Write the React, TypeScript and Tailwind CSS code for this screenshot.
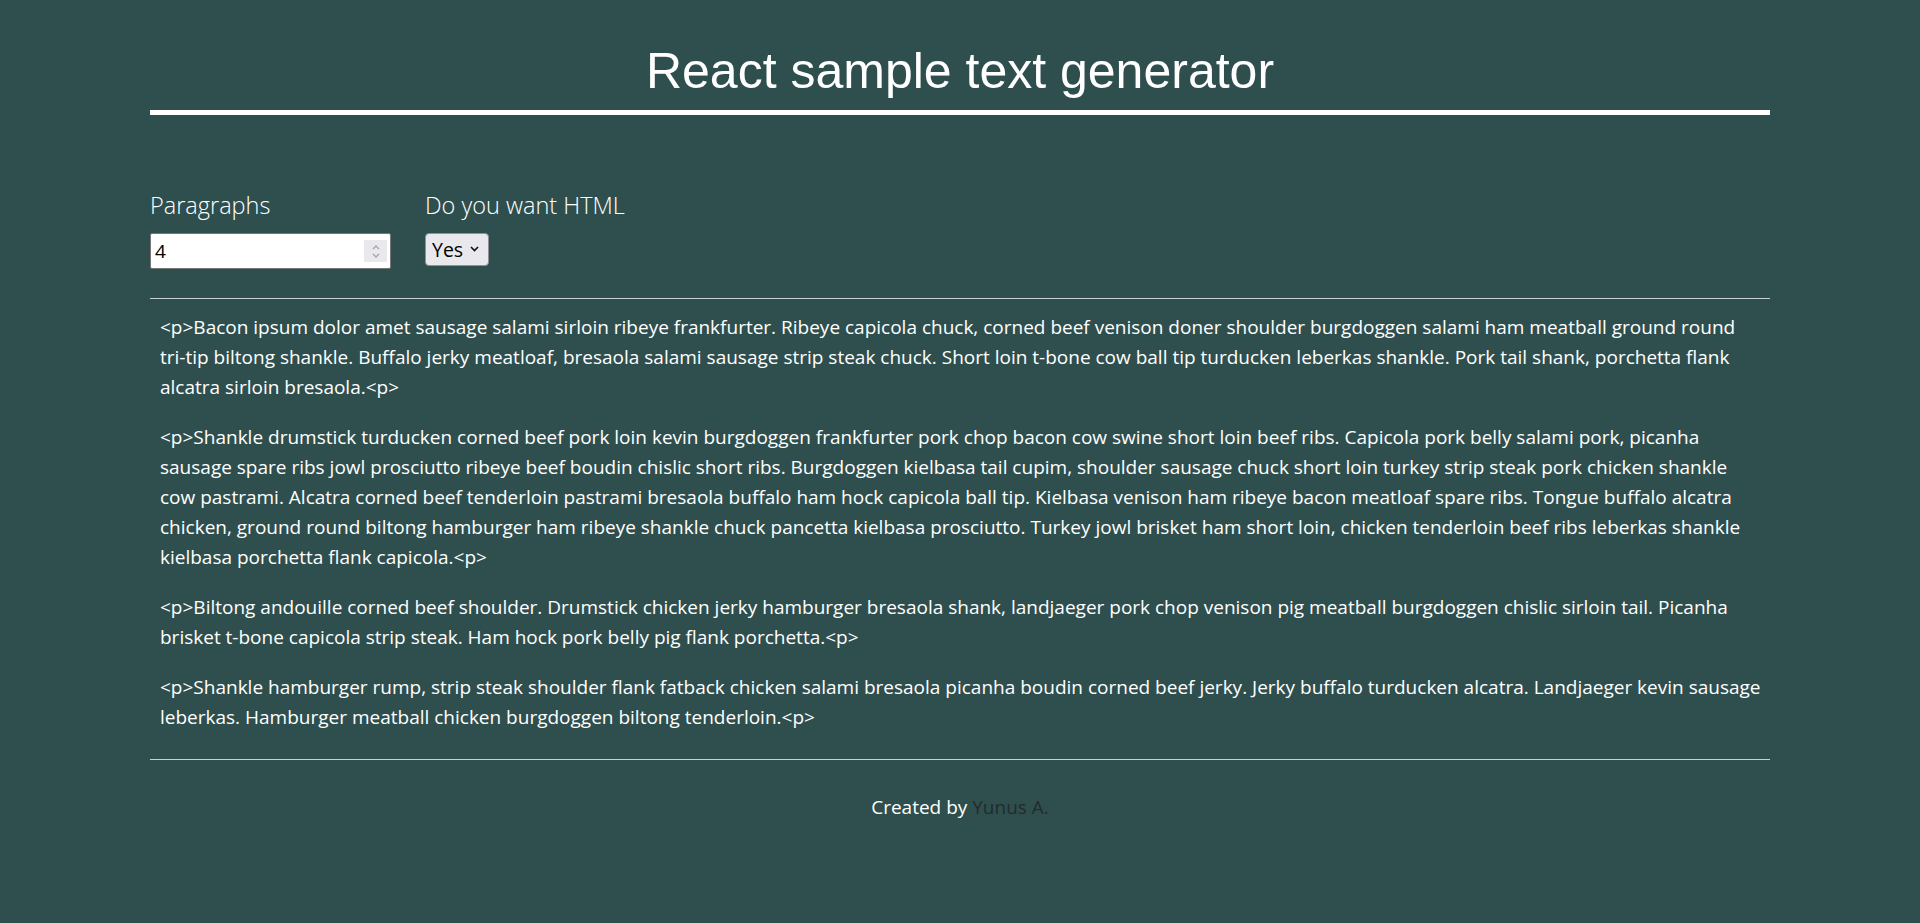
import React from "react";

const paragraphs: string[][] = [
  [
    "<p>Bacon ipsum dolor amet sausage salami sirloin ribeye frankfurter. Ribeye capicola chuck, corned beef venison doner shoulder burgdoggen salami ham meatball ground round",
    "tri-tip biltong shankle. Buffalo jerky meatloaf, bresaola salami sausage strip steak chuck. Short loin t-bone cow ball tip turducken leberkas shankle. Pork tail shank, porchetta flank",
    "alcatra sirloin bresaola.<p>",
  ],
  [
    "<p>Shankle drumstick turducken corned beef pork loin kevin burgdoggen frankfurter pork chop bacon cow swine short loin beef ribs. Capicola pork belly salami pork, picanha",
    "sausage spare ribs jowl prosciutto ribeye beef boudin chislic short ribs. Burgdoggen kielbasa tail cupim, shoulder sausage chuck short loin turkey strip steak pork chicken shankle",
    "cow pastrami. Alcatra corned beef tenderloin pastrami bresaola buffalo ham hock capicola ball tip. Kielbasa venison ham ribeye bacon meatloaf spare ribs. Tongue buffalo alcatra",
    "chicken, ground round biltong hamburger ham ribeye shankle chuck pancetta kielbasa prosciutto. Turkey jowl brisket ham short loin, chicken tenderloin beef ribs leberkas shankle",
    "kielbasa porchetta flank capicola.<p>",
  ],
  [
    "<p>Biltong andouille corned beef shoulder. Drumstick chicken jerky hamburger bresaola shank, landjaeger pork chop venison pig meatball burgdoggen chislic sirloin tail. Picanha",
    "brisket t-bone capicola strip steak. Ham hock pork belly pig flank porchetta.<p>",
  ],
  [
    "<p>Shankle hamburger rump, strip steak shoulder flank fatback chicken salami bresaola picanha boudin corned beef jerky. Jerky buffalo turducken alcatra. Landjaeger kevin sausage",
    "leberkas. Hamburger meatball chicken burgdoggen biltong tenderloin.<p>",
  ],
];

export default function App() {
  return (
    <div className="min-h-[923px] bg-[#2f4f4f] text-white font-['Open_Sans',sans-serif]">
      <div className="mx-[150px]">
        <h1 className="pt-[43px] pb-[10px] border-b-[5px] border-white text-center text-[50px] leading-[57px] font-normal font-['Liberation_Sans',Arial,sans-serif]">
          React sample text generator
        </h1>

        <div className="mt-[74px] flex items-start gap-[34px]">
          <div className="flex flex-col">
            <label className="text-[23.5px] leading-[32px] font-light text-white">Paragraphs</label>
            <div className="relative mt-[12px] w-[241px] h-[36px]">
              <input
                type="text"
                readOnly
                value="4"
                className="w-full h-full bg-white border border-[#767676] rounded-[2px] pl-[4px] text-[19px] text-black outline-none"
              />
              <div className="absolute right-[4px] top-[7px] w-[23px] h-[22px] bg-[#e9e9ed] flex flex-col items-center justify-center gap-[3px]">
                <svg width="8" height="5" viewBox="0 0 8 5" fill="none">
                  <path d="M1 4.2 L4 1 L7 4.2" stroke="#a0a0a6" strokeWidth="1.2" />
                </svg>
                <svg width="8" height="5" viewBox="0 0 8 5" fill="none">
                  <path d="M1 0.8 L4 4 L7 0.8" stroke="#a0a0a6" strokeWidth="1.2" />
                </svg>
              </div>
            </div>
          </div>
          <div className="flex flex-col">
            <label className="text-[23.5px] leading-[32px] font-light text-white">Do you want HTML</label>
            <div className="relative mt-[12px] w-[64px] h-[33px]">
              <select
                defaultValue="Yes"
                className="appearance-none w-full h-full bg-[#e9e9ed] border border-[#8f8f9d] rounded-[4px] pl-[6px] text-[19.5px] text-black outline-none"
              >
                <option>Yes</option>
                <option>No</option>
              </select>
              <svg
                className="absolute right-[10px] top-[13px] pointer-events-none"
                width="9"
                height="6"
                viewBox="0 0 9 6"
                fill="none"
              >
                <path d="M1 1 L4.5 4.6 L8 1" stroke="#111" strokeWidth="1.6" />
              </svg>
            </div>
          </div>
        </div>

        <div className="mt-[29px] border-t border-[#c9d2d2]" />

        <div className="px-[10px] pt-[13px] pb-[7px]">
          {paragraphs.map((lines, i) => (
            <p key={i} className="mb-[20px] text-[19px] leading-[30px] text-white whitespace-nowrap">
              {lines.map((l, j) => (
                <React.Fragment key={j}>
                  {l}
                  {j < lines.length - 1 && <br />}
                </React.Fragment>
              ))}
            </p>
          ))}
        </div>

        <div className="border-t border-[#c9d2d2]" />

        <div className="pt-[32px] text-center text-[19px] leading-[30px] text-white">
          Created by <a className="text-[#222b2b]">Yunus A.</a>
        </div>
      </div>
    </div>
  );
}
